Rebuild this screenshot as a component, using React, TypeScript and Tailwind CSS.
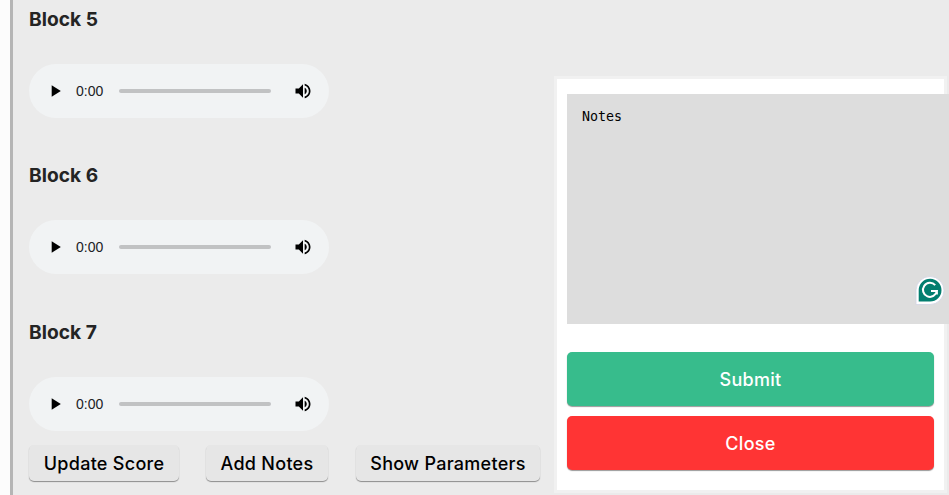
import React from "react";

function AudioPlayer() {
  return (
    <div className="flex h-[54px] w-[300px] items-center rounded-full bg-[#f1f3f4] pl-4 pr-4 font-['Liberation_Sans',sans-serif]">
      <svg className="h-5 w-5 shrink-0" viewBox="0 0 24 24" fill="#000">
        <path d="M8 5v14l11-7z" />
      </svg>
      <span className="ml-[11px] w-[43px] shrink-0 text-[14px] leading-5 text-[#202124]">0:00</span>
      <div className="h-1 w-[152px] shrink-0 rounded-full bg-[#c1c2c3]" />
      <svg className="ml-[22px] h-5 w-5 shrink-0" viewBox="0 0 24 24" fill="#000">
        <path d="M3 9v6h4l5 5V4L7 9H3zm13.5 3c0-1.77-1.02-3.29-2.5-4.03v8.05c1.48-.73 2.5-2.25 2.5-4.02zM14 3.23v2.06c2.89.86 5 3.54 5 6.71s-2.11 5.85-5 6.71v2.06c4.01-.91 7-4.49 7-8.77s-2.99-7.86-7-8.77z" />
      </svg>
    </div>
  );
}

function Block({ title }: { title: string }) {
  return (
    <section className="h-[156.4px]">
      <h3 className="mb-[33px] h-[23px] text-[19.2px] font-bold leading-[23px] text-[#242424]">{title}</h3>
      <AudioPlayer />
    </section>
  );
}

function ActionButton({ label, width }: { label: string; width: string }) {
  return (
    <button
      className={`${width} h-[36px] whitespace-nowrap rounded-[5px] bg-[#e6e6e6] text-center text-[18px] font-[450] leading-[38px] tracking-[0.28px] text-black shadow-[0_1px_1px_rgba(0,0,0,0.4)]`}
    >
      {label}
    </button>
  );
}

function GrammarBadge() {
  return (
    <svg className="absolute left-[915px] top-[275px] h-[30px] w-[30px]" viewBox="0 0 30 30" fill="none">
      <path d="M1 29.5V15A14 14 0 1 1 15 29.5Z" fill="#fff" stroke="#d0d3e4" strokeWidth=".8" />
      <path d="M3.7 26.6V15A11.4 11.4 0 1 1 15 26.6Z" fill="#027e6f" />
      <path d="M20.2 10.2A7 7 0 1 0 21.9 15.9H16M21.9 15.9V19.5" stroke="#fff" strokeWidth="2" />
    </svg>
  );
}

export default function App() {
  return (
    <main className="relative h-[495px] w-[949px] overflow-hidden bg-[#fcfcfc] pl-[10px] font-['Inter',sans-serif]">
      <div className="h-full border-l-[3px] border-[#b5b5b5] bg-[#ebebeb] pl-4 pt-2">
        <Block title="Block 5" />
        <Block title="Block 6" />
        <div className="h-[124.2px]">
          <Block title="Block 7" />
        </div>
        <div className="flex">
          <ActionButton label="Update Score" width="w-[150px]" />
          <div className="ml-[27px]">
            <ActionButton label="Add Notes" width="w-[122px]" />
          </div>
          <div className="ml-7">
            <ActionButton label="Show Parameters" width="w-[184px]" />
          </div>
        </div>
      </div>

      <form className="absolute left-[554px] top-[76px] flex h-[417px] w-[393px] flex-col border-[3px] border-[#f1f1f1] bg-white px-[10px] pt-[15px]">
        <textarea
          className="block h-[230px] w-[400px] shrink-0 resize-none bg-[#dddddd] p-[15px] font-['DejaVu_Sans_Mono',monospace] text-[13.333px] leading-[16px] text-black outline-none"
          defaultValue="Notes"
        />
        <button
          type="button"
          className="mt-7 h-[54px] w-full shrink-0 rounded-[5px] bg-[#37bc8c] pt-px text-[18px] font-[450] tracking-[0.28px] text-white shadow-[0_1px_1px_rgba(0,0,0,0.4)]"
        >
          Submit
        </button>
        <button
          type="button"
          className="mt-[10px] h-[54px] w-full shrink-0 rounded-[5px] bg-[#ff3434] pt-px text-[18px] font-[450] tracking-[0.28px] text-white shadow-[0_1px_1px_rgba(0,0,0,0.4)]"
        >
          Close
        </button>
      </form>
      <GrammarBadge />
    </main>
  );
}
